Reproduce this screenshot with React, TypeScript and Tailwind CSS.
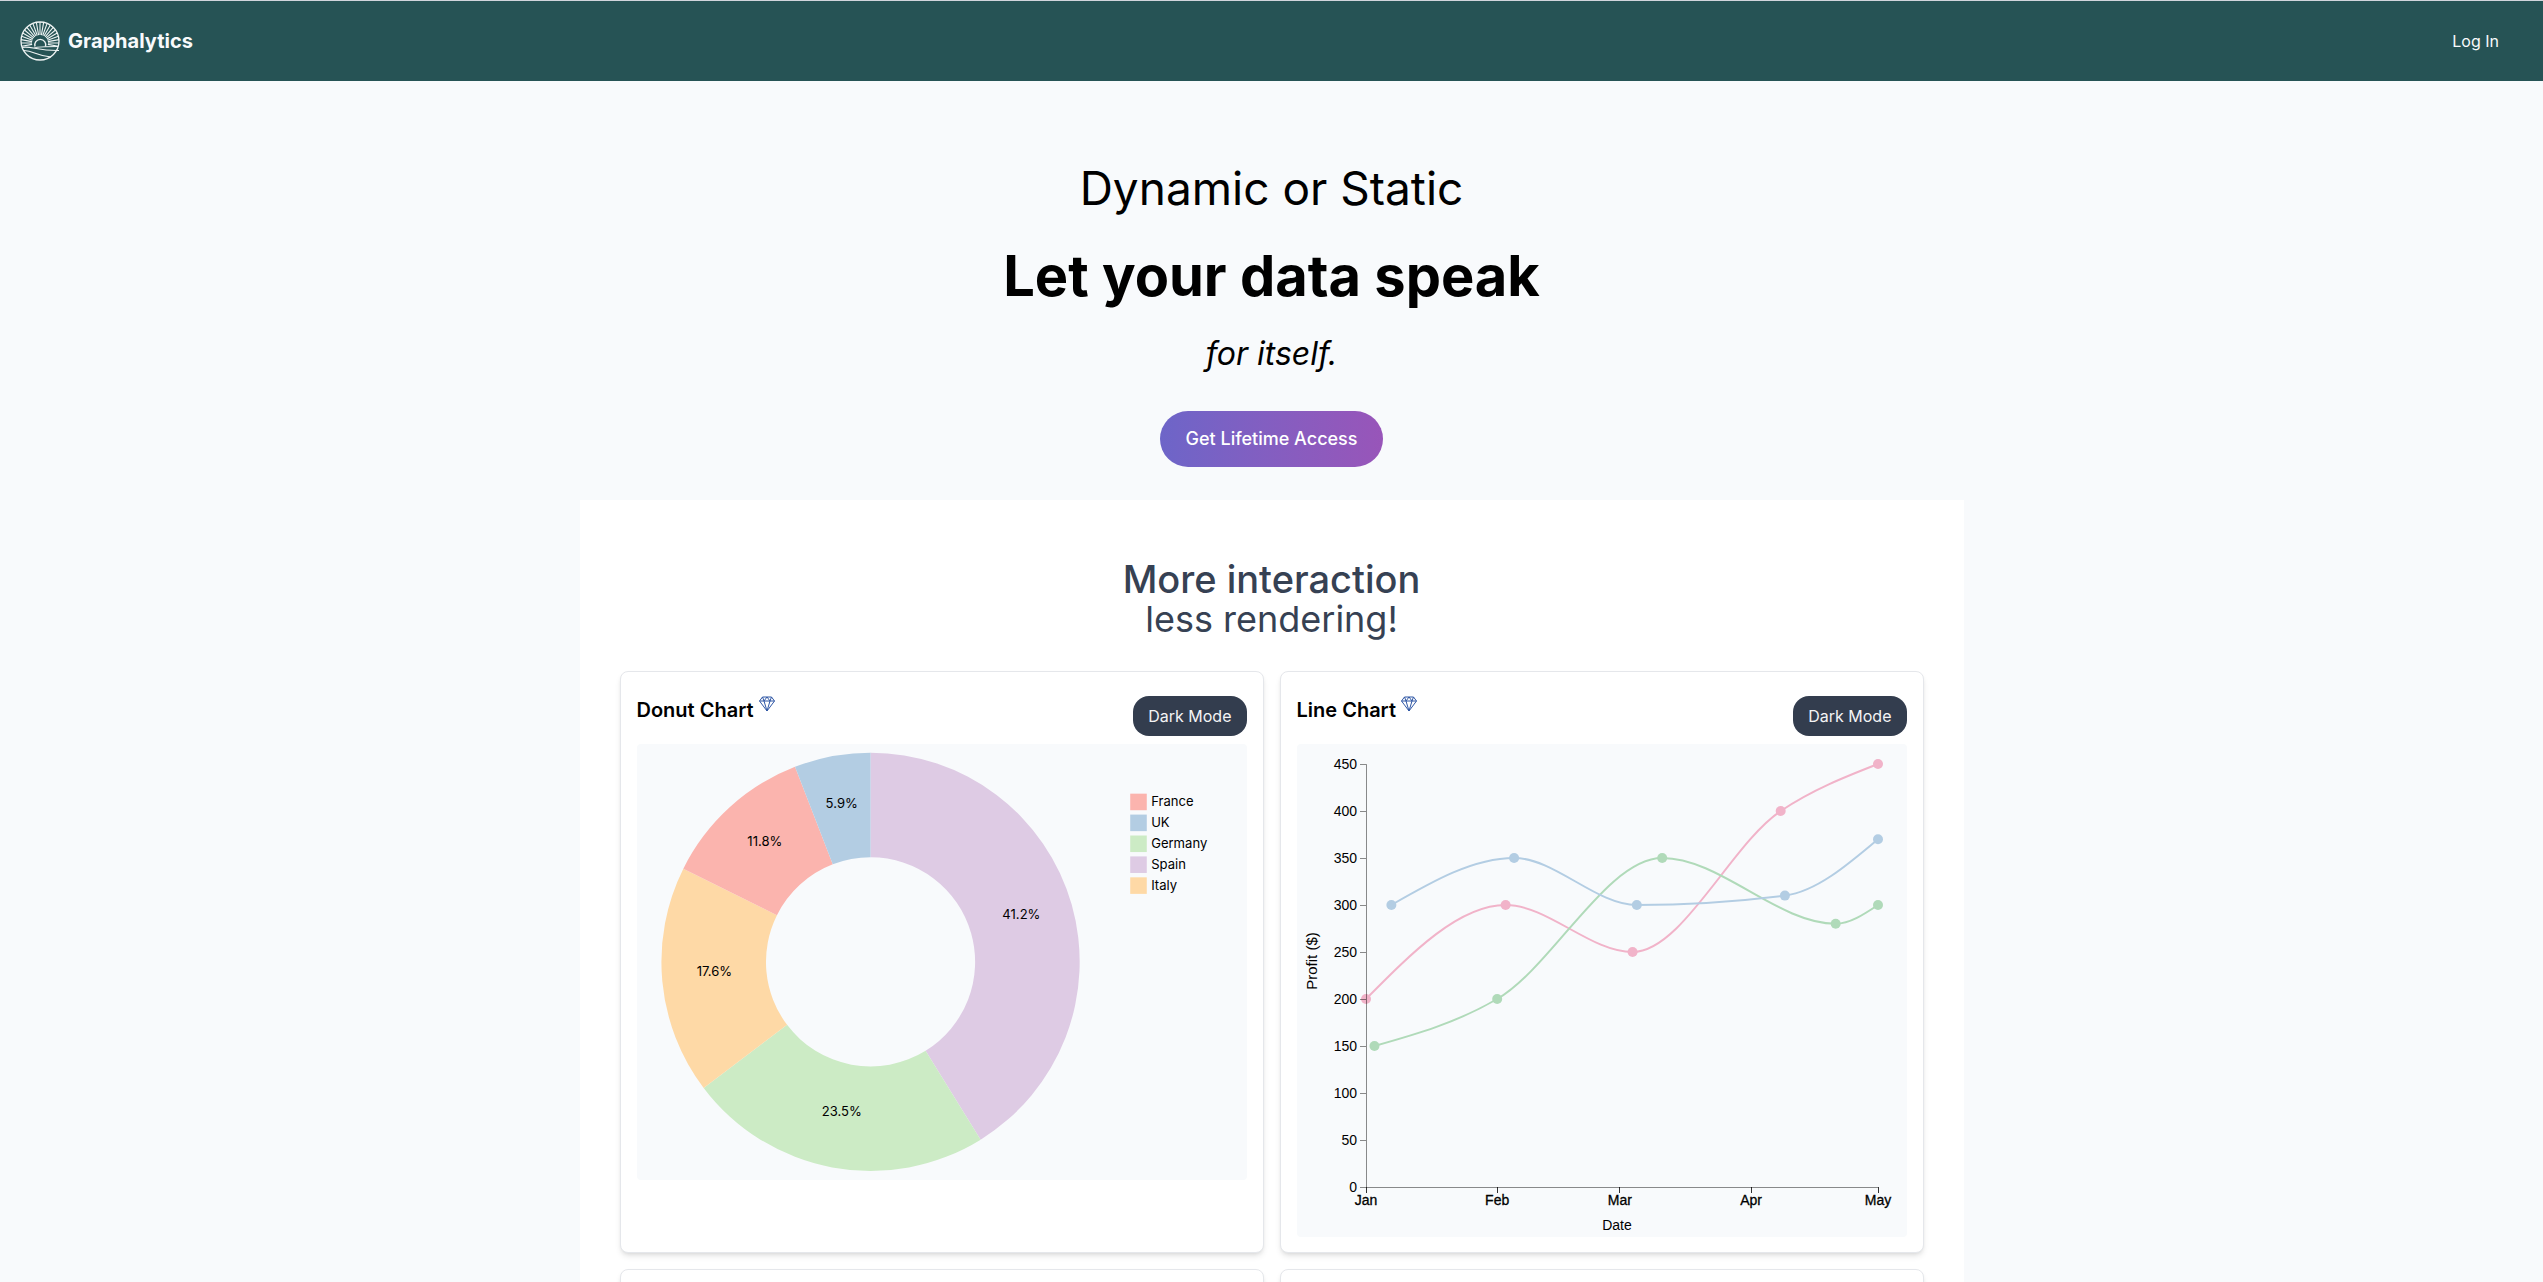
import React from "react";

type Slice = { label: string; value: number; color: string };

const slices: Slice[] = [
  { label: "Spain", value: 7, color: "#decbe4" },
  { label: "Germany", value: 4, color: "#ccebc5" },
  { label: "Italy", value: 3, color: "#fed9a6" },
  { label: "France", value: 2, color: "#fbb4ae" },
  { label: "UK", value: 1, color: "#b3cde3" },
];

const legend = ["France", "UK", "Germany", "Spain", "Italy"];

const OUTER = 240;
const INNER = 120;

function polar(r: number, a: number) {
  return [r * Math.sin(a), -r * Math.cos(a)];
}

function DonutChart() {
  const total = slices.reduce((s, d) => s + d.value, 0);
  let angle = 0;
  const arcs = slices.map((d) => {
    const a0 = angle;
    const a1 = angle + (d.value / total) * Math.PI * 2;
    angle = a1;
    const large = a1 - a0 > Math.PI ? 1 : 0;
    const path = `M${polar(OUTER, a0)}A${OUTER},${OUTER},0,${large},1,${polar(OUTER, a1)}L${polar(INNER, a1)}A${INNER},${INNER},0,${large},0,${polar(INNER, a0)}Z`;
    const [cx, cy] = polar((OUTER + INNER) / 2, (a0 + a1) / 2);
    return { ...d, path, cx, cy, pct: ((d.value / total) * 100).toFixed(1) + "%" };
  });
  return (
    <svg viewBox="0 0 700 500" className="block w-full rounded bg-slate-50" role="img" aria-label="Donut chart">
      <g transform="translate(268,250)">
        {arcs.map((a) => (
          <path key={a.label} d={a.path} fill={a.color} />
        ))}
        {arcs.map((a) => (
          <text key={a.label} x={a.cx} y={a.cy} textAnchor="middle" fontSize={15}>
            {a.pct}
          </text>
        ))}
      </g>
      {legend.map((name, i) => (
        <g key={name} transform={`translate(566,${57 + i * 24})`}>
          <rect width={19} height={19} fill={slices.find((s) => s.label === name)!.color} />
          <text x={24} y={14} fontSize={15}>
            {name}
          </text>
        </g>
      ))}
    </svg>
  );
}

type Point = [number, number];

const series: { color: string; points: Point[] }[] = [
  { color: "#f1b3c9", points: [[0, 200], [33, 300], [63, 250], [98, 400], [121, 450]] },
  { color: "#b0dab9", points: [[2, 150], [31, 200], [70, 350], [111, 280], [121, 300]] },
  { color: "#b3cde3", points: [[6, 300], [35, 350], [64, 300], [99, 310], [121, 370]] },
];

const months: [string, number][] = [["Jan", 0], ["Feb", 31], ["Mar", 60], ["Apr", 91], ["May", 121]];
const profits = [0, 50, 100, 150, 200, 250, 300, 350, 400, 450];

const sx = (day: number) => 69 + (day / 121) * 512;
const sy = (v: number) => 443 - (v / 450) * 423;

/* Monotone cubic interpolation through the points. */
function monotone(points: Point[]) {
  const p = points.map(([a, b]) => [sx(a), sy(b)]);
  const n = p.length;
  const h = p.slice(1).map((q, i) => q[0] - p[i][0]);
  const s = p.slice(1).map((q, i) => (q[1] - p[i][1]) / h[i]);
  const t: number[] = new Array(n).fill(0);
  for (let i = 1; i < n - 1; i++) {
    const m = (s[i - 1] * h[i] + s[i] * h[i - 1]) / (h[i - 1] + h[i]);
    t[i] =
      (Math.sign(s[i - 1]) + Math.sign(s[i])) *
      Math.min(Math.abs(s[i - 1]), Math.abs(s[i]), 0.5 * Math.abs(m));
  }
  t[0] = (3 * s[0] - t[1]) / 2;
  t[n - 1] = (3 * s[n - 2] - t[n - 2]) / 2;
  let d = `M${p[0]}`;
  for (let i = 0; i < n - 1; i++) {
    const k = h[i] / 3;
    d += `C${p[i][0] + k},${p[i][1] + k * t[i]},${p[i + 1][0] - k},${p[i + 1][1] - k * t[i + 1]},${p[i + 1]}`;
  }
  return d;
}

function LineChart() {
  return (
    <svg
      viewBox="0 0 610 493"
      className="block w-full rounded bg-slate-50 font-['Liberation_Sans',sans-serif]"
      role="img"
      aria-label="Line chart"
    >
      {series.map((s) => (
        <g key={s.color}>
          <path d={monotone(s.points)} fill="none" stroke={s.color} strokeWidth={2} />
          {s.points.map(([a, b]) => (
            <circle key={a} cx={sx(a)} cy={sy(b)} r={5} fill={s.color} />
          ))}
        </g>
      ))}
      <g stroke="#000" strokeOpacity={0.45} fill="none">
        <path d="M63,20.5H69.5V443.5H581" />
        {profits.slice(0, -1).map((v) => (
          <path key={v} d={`M63,${sy(v) + 0.5}H69`} />
        ))}
        {months.map(([m, d]) => (
          <path key={m} strokeOpacity={0.8} d={`M${Math.floor(sx(d)) + 0.5},443V449`} />
        ))}
      </g>
      {profits.map((v) => (
        <text key={v} x={60} y={sy(v) + 5} textAnchor="end" fontSize={14}>
          {v}
        </text>
      ))}
      {months.map(([m, d]) => (
        <text key={m} x={sx(d)} y={461} textAnchor="middle" fontSize={14} stroke="#000" strokeWidth={0.3}>
          {m}
        </text>
      ))}
      <text x={320} y={486} textAnchor="middle" fontSize={14}>
        Date
      </text>
      <text transform="translate(20,217) rotate(-90)" textAnchor="middle" fontSize={15}>
        Profit ($)
      </text>
    </svg>
  );
}

function Diamond() {
  return (
    <svg viewBox="0 0 16 16" className="size-4" fill="none" stroke="#2f57a5" strokeWidth="1" strokeLinejoin="round" aria-hidden="true">
      <path d="M3.5,1H12.5L15.5,5L8,15L.5,5ZM.5,5H15.5M5,5L8,15L11,5M3.5,1L5,5L8,1L11,5L12.5,1" />
    </svg>
  );
}

function Card({ title, children }: { title?: string; children?: React.ReactNode }) {
  return (
    <section className="min-h-40 rounded-lg border border-gray-200 bg-white px-4 pt-6 pb-[15px] shadow-md">
      {title && (
        <div className="mb-2 flex h-10 items-start justify-between">
          <h3 className="flex items-start gap-[5px] text-xl leading-7 font-semibold">
            {title}
            <Diamond />
          </h3>
          <button type="button" className="h-10 rounded-2xl bg-[#333d4e] px-[15px] text-base text-gray-100">
            Dark Mode
          </button>
        </div>
      )}
      {children}
    </section>
  );
}

function Logo() {
  const rays = Array.from({ length: 21 }, (_, i) => {
    const a = (-100 + i * 10) * (Math.PI / 180);
    const dx = Math.sin(a);
    const dy = -Math.cos(a);
    const cy = 22;
    const b = dy * (cy - 20);
    const reach = -b + Math.sqrt(b * b - ((cy - 20) ** 2 - 19 * 19));
    return `M${20 + dx * 8},${cy + dy * 8}L${20 + dx * reach},${cy + dy * reach}`;
  }).join("");
  return (
    <svg viewBox="0 0 40 40" className="size-10" fill="none" stroke="#eef3f3" strokeWidth="1.1" aria-hidden="true">
      <circle cx="20" cy="20" r="19" strokeWidth="1.3" />
      <path d={rays} />
      <path d="M15,25.5A5.5,5.5 0 1 1 25.5,25.5" strokeWidth="1.4" />
      <path d="M2,26.5C10,24.5 18,30 39,29.5M4,29.5C14,30 17,35 31,36M14,27C18,25.5 26,25.5 38,25.5" />
    </svg>
  );
}

export default function App() {
  return (
    <div className="h-screen overflow-hidden bg-slate-50 font-[Inter,sans-serif] text-black">
      <header className="flex h-[81px] items-center justify-between border-t border-gray-300 bg-[#265355] pr-11 pl-5">
        <a href="#" className="flex items-center gap-2 text-xl font-bold text-slate-50">
          <Logo />
          Graphalytics
        </a>
        <a href="#" className="text-base text-slate-50">
          Log In
        </a>
      </header>
      <main>
        <div className="flex flex-col items-center pt-20 text-center">
          <h2 className="text-[46px] leading-[54px]">Dynamic or Static</h2>
          <h1 className="mt-[25px] text-[56px] leading-[72px] font-bold">Let your data speak</h1>
          <p className="mt-5 text-[32px] leading-[43px] italic">for itself.</p>
          <button
            type="button"
            className="mt-9 h-14 rounded-full bg-linear-to-r from-[#6d65c8] to-[#9855b9] px-[26px] text-lg font-medium text-white"
          >
            Get Lifetime Access
          </button>
        </div>
        <div className="mx-auto mt-[33px] max-w-[1384px] bg-white px-10 pt-15">
          <h2 className="text-center text-[38px] leading-[39px] font-medium text-gray-700">
            More interaction
            <br />
            <span className="text-4xl leading-[39px] font-normal">less rendering!</span>
          </h2>
          <div className="mt-8 grid grid-cols-2 gap-4">
            <Card title="Donut Chart">
              <DonutChart />
            </Card>
            <Card title="Line Chart">
              <LineChart />
            </Card>
            <Card />
            <Card />
          </div>
        </div>
      </main>
    </div>
  );
}
